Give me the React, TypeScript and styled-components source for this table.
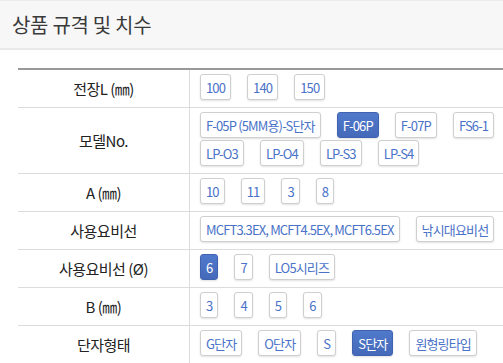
import React from 'react'
import styled, { createGlobalStyle } from 'styled-components'

type Spec = { label: string; options: string[]; selected?: string }

const specs: Spec[] = [
  { label: '전장L (㎜)', options: ['100', '140', '150'] },
  {
    label: '모델No.',
    options: ['F-05P (5MM용)-S단자', 'F-06P', 'F-07P', 'FS6-1', 'LP-O3', 'LP-O4', 'LP-S3', 'LP-S4'],
    selected: 'F-06P',
  },
  { label: 'A (㎜)', options: ['10', '11', '3', '8'] },
  { label: '사용요비선', options: ['MCFT3.3EX, MCFT4.5EX, MCFT6.5EX', '낚시대요비선'] },
  { label: '사용요비선 (Ø)', options: ['6', '7', 'LO5시리즈'], selected: '6' },
  { label: 'B (㎜)', options: ['3', '4', '5', '6'] },
  { label: '단자형태', options: ['G단자', 'O단자', 'S', 'S단자', '원형링타입'], selected: 'S단자' },
]

const App = () => {
  return (
    <Page>
      <GlobalStyle />
      <Header>
        <Title>상품 규격 및 치수</Title>
      </Header>
      <Table>
        {specs.map((spec) => (
          <Row key={spec.label}>
            <Label>{spec.label}</Label>
            <Values>
              {spec.options.map((opt) => (
                <Chip key={opt} active={opt === spec.selected}>{opt}</Chip>
              ))}
            </Values>
          </Row>
        ))}
      </Table>
    </Page>
  )
}

export default App

const GlobalStyle = createGlobalStyle`
    body {
        margin: 0;
        background: #fff;
        overflow: hidden;
        font-family: 'Noto Sans CJK KR', 'Noto Sans', sans-serif;
    }
`

const Page = styled.div`
    width: 503px;
    height: 363px;
    overflow: hidden;
`

const Header = styled.div`
    height: 47px;
    border-top: 1px solid #ececec;
    border-bottom: 2px solid #e9e9e9;
    background-color: #f7f7f7;
    display: flex;
    align-items: center;
    padding-left: 12px;
`

const Title = styled.h2`
    margin: 0;
    font-size: 20px;
    font-weight: 400;
    color: #3a3a3a;
    letter-spacing: -0.3px;
`

const Table = styled.div`
    margin: 18px 0 0 18px;
    width: 500px;
    border-top: 2px solid #999;
`

const Row = styled.div`
    display: flex;
    border-bottom: 1px solid #dcdcdc;
`

const Label = styled.div`
    width: 171px;
    flex-shrink: 0;
    border-right: 1px solid #dcdcdc;
    display: flex;
    align-items: center;
    justify-content: center;
    font-size: 15px;
    color: #222;
    letter-spacing: -0.5px;
`

const Values = styled.div`
    flex: 1;
    display: flex;
    flex-wrap: wrap;
    column-gap: 16px;
    row-gap: 2px;
    padding: 4px 0 7px 10px;
`

const Chip = styled.div<{ active?: boolean }>`
    height: 26px;
    box-sizing: border-box;
    padding: 0 5px;
    display: flex;
    align-items: center;
    font-size: 13px;
    letter-spacing: -0.85px;
    border-radius: 3px;
    border: 1px solid ${(p) => (p.active ? '#3f63b0' : '#cfcfcf')};
    background: ${(p) => (p.active ? 'linear-gradient(#5079cb, #4569b9)' : '#fff')};
    color: ${(p) => (p.active ? '#fff' : '#4a72c8')};
    box-shadow: 0 1px 2px rgba(0, 0, 0, 0.12);
`
